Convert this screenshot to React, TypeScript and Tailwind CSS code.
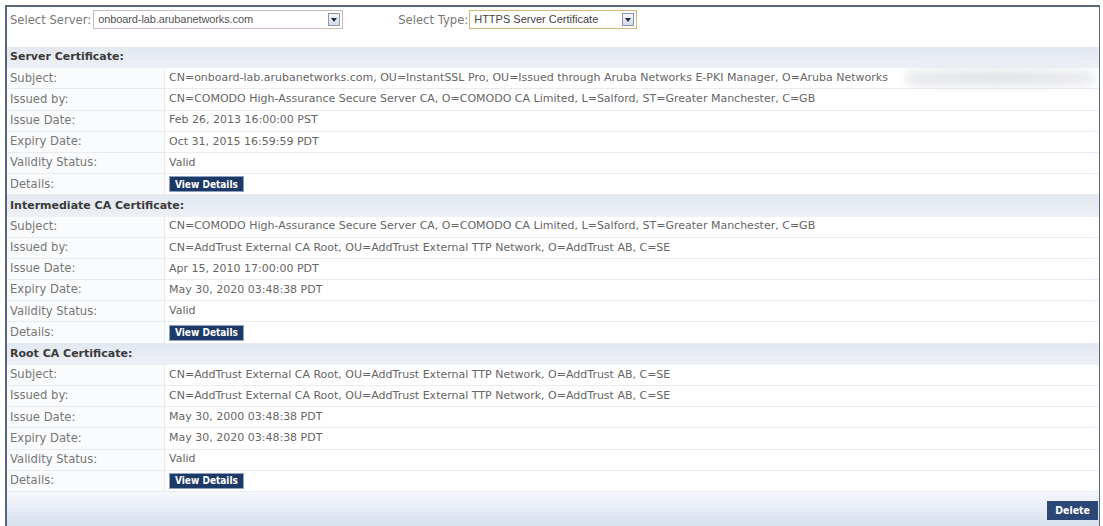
import React from 'react';

type Row = { label: string; value?: string; button?: boolean };
type Section = { title: string; rows: Row[] };

const sections: Section[] = [
  {
    title: 'Server Certificate:',
    rows: [
      { label: 'Subject:', value: 'CN=onboard-lab.arubanetworks.com, OU=InstantSSL Pro, OU=Issued through Aruba Networks E-PKI Manager, O=Aruba Networks' },
      { label: 'Issued by:', value: 'CN=COMODO High-Assurance Secure Server CA, O=COMODO CA Limited, L=Salford, ST=Greater Manchester, C=GB' },
      { label: 'Issue Date:', value: 'Feb 26, 2013 16:00:00 PST' },
      { label: 'Expiry Date:', value: 'Oct 31, 2015 16:59:59 PDT' },
      { label: 'Validity Status:', value: 'Valid' },
      { label: 'Details:', button: true },
    ],
  },
  {
    title: 'Intermediate CA Certificate:',
    rows: [
      { label: 'Subject:', value: 'CN=COMODO High-Assurance Secure Server CA, O=COMODO CA Limited, L=Salford, ST=Greater Manchester, C=GB' },
      { label: 'Issued by:', value: 'CN=AddTrust External CA Root, OU=AddTrust External TTP Network, O=AddTrust AB, C=SE' },
      { label: 'Issue Date:', value: 'Apr 15, 2010 17:00:00 PDT' },
      { label: 'Expiry Date:', value: 'May 30, 2020 03:48:38 PDT' },
      { label: 'Validity Status:', value: 'Valid' },
      { label: 'Details:', button: true },
    ],
  },
  {
    title: 'Root CA Certificate:',
    rows: [
      { label: 'Subject:', value: 'CN=AddTrust External CA Root, OU=AddTrust External TTP Network, O=AddTrust AB, C=SE' },
      { label: 'Issued by:', value: 'CN=AddTrust External CA Root, OU=AddTrust External TTP Network, O=AddTrust AB, C=SE' },
      { label: 'Issue Date:', value: 'May 30, 2000 03:48:38 PDT' },
      { label: 'Expiry Date:', value: 'May 30, 2020 03:48:38 PDT' },
      { label: 'Validity Status:', value: 'Valid' },
      { label: 'Details:', button: true },
    ],
  },
];

const Arrow: React.FC = () => (
  <div className="w-[12px] h-[13px] border border-[#8a98ac] bg-gradient-to-b from-[#f4f6f9] to-[#d5dbe4] flex items-center justify-center">
    <svg width="6" height="4" viewBox="0 0 6 4">
      <path d="M0 0 L6 0 L3 4 Z" fill="#1e2b45" />
    </svg>
  </div>
);

const App: React.FC = () => {
  return (
    <div className="w-[1103px] h-[526px] bg-white pt-[5px] pl-[5px] pr-[3px] font-['DejaVu_Sans',sans-serif] text-[11px] text-[#666]">
      <div className="h-full border-t-2 border-l-2 border-r border-[#56667c] flex flex-col">
        {/* Selectors */}
        <div className="h-[40px] flex items-start pt-[3px] pl-[3px] shrink-0">
          <span className="leading-[20px] text-[11.6px] text-[#777]">Select Server:</span>
          <div className="ml-[2px] w-[250px] h-[19px] border border-[#c9b9b4] bg-white flex items-center justify-between pl-[4px] pr-[2px]">
            <span className="font-['Liberation_Sans',sans-serif] text-[11px] text-[#555] tracking-[-0.1px]">onboard-lab.arubanetworks.com</span>
            <Arrow />
          </div>
          <span className="ml-[55px] leading-[20px] text-[11.6px] text-[#777]">Select Type:</span>
          <div className="ml-[1px] w-[168px] h-[19px] border border-[#d2b877] bg-white flex items-center justify-between pl-[4px] pr-[2px]">
            <span className="font-['Liberation_Sans',sans-serif] text-[11px] text-[#444]">HTTPS Server Certificate</span>
            <Arrow />
          </div>
        </div>

        {sections.map((s) => (
          <div key={s.title}>
            <div className="h-[21.2px] flex items-center pl-[3px] bg-gradient-to-b from-[#e3e8f1] to-[#eef1f6] font-bold text-[#3a3a3a] text-[11px]">
              {s.title}
            </div>
            {s.rows.map((r, i) => (
              <div key={i} className="h-[21.2px] flex border-b border-[#e9ebef] relative">
                <div className="w-[158px] shrink-0 flex items-center pl-[3px] bg-[#fafbfc] border-r border-[#e9ebef] text-[11.6px] text-[#777]">
                  {r.label}
                </div>
                <div className="flex-1 flex items-center pl-[4px] text-[#666] whitespace-nowrap overflow-hidden">
                  {r.button ? (
                    <span className="h-[16px] px-[5px] flex items-center bg-[#1d3966] border border-[#8da0bf] text-white font-bold text-[10px] font-['DejaVu_Sans_Condensed',sans-serif]">
                      View Details
                    </span>
                  ) : (
                    r.value
                  )}
                </div>
                {s.title === 'Server Certificate:' && i === 0 && (
                  <div className="absolute left-[898px] top-[2px] w-[190px] h-[16px] rounded-full bg-gradient-to-r from-[#e4e6ea] via-[#d9dce2] to-[#e6e8ec] blur-[5px] opacity-80" />
                )}
              </div>
            ))}
          </div>
        ))}

        {/* Footer */}
        <div className="flex-1 bg-gradient-to-b from-[#f5f7fb] to-[#d8e0ee] flex items-center justify-end pr-[1px] pt-[4px]">
          <span className="h-[19px] px-[8px] flex items-center bg-[#2a4775] text-white font-bold text-[10.5px] font-['DejaVu_Sans_Condensed',sans-serif]">
            Delete
          </span>
        </div>
      </div>
    </div>
  );
};

export default App;
